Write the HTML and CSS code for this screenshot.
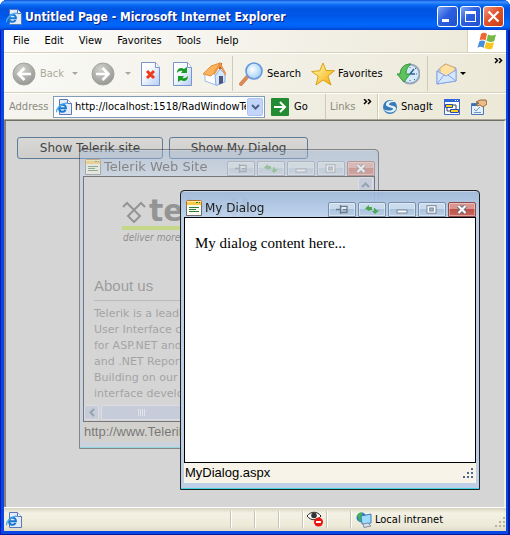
FILE: index.html
```html
<!DOCTYPE html>
<html lang="en">
<head>
<meta charset="utf-8">
<title>Untitled Page - Microsoft Internet Explorer</title>
<link rel="stylesheet" href="styles.css">
</head>
<body>
<svg class="defs" aria-hidden="true">
  <defs>
    <linearGradient id="page-fill" x1="0" y1="0" x2="1" y2="1"><stop offset="0.3" stop-color="#fff"/><stop offset="1" stop-color="#b4cdf5"/></linearGradient>
    <radialGradient id="disc" cx="0.4" cy="0.3" r="0.8"><stop offset="0" stop-color="#d2d2ce"/><stop offset="1" stop-color="#8f8f8b"/></radialGradient>
    <linearGradient id="gold" x1="0" y1="0" x2="1" y2="1"><stop offset="0.1" stop-color="#fff9a8"/><stop offset="1" stop-color="#f5a400"/></linearGradient>
    <radialGradient id="lens" cx="0.4" cy="0.4" r="0.6"><stop offset="0" stop-color="#fff"/><stop offset="1" stop-color="#a3d0f8"/></radialGradient>
  </defs>
  <symbol id="ie" viewBox="0 0 16 16">
    <path d="M3.5.5h8l4 4v11h-12z" fill="#e4ecfa" stroke="#5b78b8"/>
    <path d="M11.500.5v4h4" fill="#fff" stroke="#5b78b8"/>
    <path d="M2.300 9.300h7.600c.2-4.800-6.300-4.800-6.800-.3-.3 4.300 4.800 4.800 6.500 1.900" fill="none" stroke="#1878d0" stroke-width="2"/>
    <path d="M.8 13.200C-.8 10 6.500 3.500 11 4.300" fill="none" stroke="#48a9ee" stroke-width="1.300"/>
  </symbol>
  <symbol id="app" viewBox="0 0 16 16">
    <rect x=".5" y=".5" width="15" height="15" rx="1" fill="#fbfaf0" stroke="#b0702c"/>
    <path d="M1 1h14v4H1z" fill="#fbc94a"/><path d="M1 1h14v1H1z" fill="#fff0a0"/>
    <path d="M10 2h2v1h-2zm3 0h1v1h-1z" fill="#2d7a34"/>
    <path d="M3 7.500h10M3 9.500h7M3 11.500h10" stroke="#2d7d38"/>
    <path d="M15.500 6v9.500H.5V7" fill="none" stroke="#707070"/>
  </symbol>
  <symbol id="pin" viewBox="0 0 12 9"><path d="M0 4.500h4M4.500 0v9M5 1.500h6v6H5M7 4.500h4" fill="none" stroke="#6b7b8e" stroke-width="1.300"/><path d="M6 2.300h4.300v1.400H6z" fill="#fff"/></symbol>
  <symbol id="reload" viewBox="0 0 14 9"><path d="M0 3.500 4 0v2h3v3H5L4 6zM14 5.500 10 9 7 6h2V3h1l1 2z" fill="#4aa84a"/></symbol>
  <symbol id="minus" viewBox="0 0 12 9"><rect x="1" y="5" width="10" height="3" fill="#fff" stroke="#75869a"/></symbol>
  <symbol id="square" viewBox="0 0 12 9"><rect x="1" y=".7" width="9" height="7.500" fill="#fff" stroke="#75869a"/><rect x="3.700" y="3" width="3.600" height="3" fill="#a9bdd2" stroke="#75869a"/></symbol>
  <symbol id="cross" viewBox="0 0 12 9"><path d="m2.500 1 7 7m0-7-7 7" stroke="#626b7d" stroke-width="4"/><path d="m2.500 1 7 7m0-7-7 7" stroke="#fff" stroke-width="2.200"/></symbol>
  <symbol id="more" viewBox="0 0 9 6"><path d="m1 0 2.500 2.500L1 5M5 0l2.500 2.500L5 5" fill="none" stroke="#000" stroke-width="1.500"/></symbol>
</svg>

<div class="browser">
  <header class="titlebar">
    <svg class="icon16"><use href="#ie"/></svg>
    <h1>Untitled Page - Microsoft Internet Explorer</h1>
    <div class="captions">
      <button type="button" aria-label="Minimize"><svg viewBox="0 0 21 21"><path d="M5 13h7v3H5z" fill="#fff"/></svg></button>
      <button type="button" aria-label="Maximize"><svg viewBox="0 0 21 21"><path d="M5 5h11v11H5zM6 8v7h9V8z" fill="#fff" fill-rule="evenodd"/></svg></button>
      <button type="button" class="close" aria-label="Close"><svg viewBox="0 0 21 21"><path d="m5.500 5.500 10 10m0-10-10 10" stroke="#fff" stroke-width="2.200"/></svg></button>
    </div>
  </header>

  <nav class="menubar">
    <button type="button">File</button><button type="button">Edit</button><button type="button">View</button><button type="button">Favorites</button><button type="button">Tools</button><button type="button">Help</button>
    <span class="throbber"><svg viewBox="0 0 20 18">
      <path d="M4 2c2-2 4-1.300 6 0L8.500 8.500C6.500 7 4.500 7 2.500 8.500z" fill="#ee6534"/>
      <path d="M11 2.600c3 1.500 5 1.200 8 0L17.300 9c-3 1.200-5 1.200-7.800-.2z" fill="#74b943"/>
      <path d="M2.200 9.600c2-1.500 4-1.300 6 0l-1.700 6.300C4.500 14.500 2.500 14.500.5 16z" fill="#4a8fdc"/>
      <path d="M9.200 10c3 1.400 5 1.300 7.800.2l-1.700 6.200c-3 1.300-5 1-7.800-.3z" fill="#fbc41c"/></svg></span>
  </nav>

  <div class="toolbar">
    <button type="button" class="tool back" disabled>
      <svg class="icon24" viewBox="0 0 24 24"><circle cx="12" cy="12" r="11" fill="url(#disc)" stroke="#a4a4a0"/><path d="M19 12H7m5.500-6L6.500 12l6 6" fill="none" stroke="#fff" stroke-width="2.600"/></svg>
      <span>Back</span><i class="caret"></i></button>
    <button type="button" class="tool forward" disabled aria-label="Forward">
      <svg class="icon24" viewBox="0 0 24 24"><circle cx="12" cy="12" r="11" fill="url(#disc)" stroke="#a4a4a0"/><path d="M5 12h12m-5.500-6 6 6-6 6" fill="none" stroke="#fff" stroke-width="2.600"/></svg>
      <i class="caret"></i></button>
    <button type="button" class="tool sheet" aria-label="Stop"><svg class="icon24" viewBox="0 0 24 24"><path d="M3.500.5h14l4 5v18h-18z" fill="url(#page-fill)" stroke="#7c94cc"/><path d="M17.500.5v5h4" fill="#fff" stroke="#7c94cc"/><path d="m9 9 7 7m0-7-7 7" stroke="#ee3d16" stroke-width="3"/></svg></button>
    <button type="button" class="tool sheet" aria-label="Refresh"><svg class="icon24" viewBox="0 0 24 24"><path d="M3.500.5h14l4 5v18h-18z" fill="url(#page-fill)" stroke="#7c94cc"/><path d="M17.500.5v5h4" fill="#fff" stroke="#7c94cc"/><path d="M7 11c0-5 4-6 7-4l3-2v6h-6l1.500-2C10.500 8.500 9 9 7 11zM18 14c0 5-4 6-7 4l-3 2v-6h6l-1.500 2c2 .5 3.500 0 5.500-2z" fill="#179b23"/></svg></button>
    <button type="button" class="tool home" aria-label="Home"><svg class="icon24" viewBox="0 0 24 24"><path d="m3 13 4-5 7 6v9L3 19z" fill="#fff" stroke="#9dbbe6"/><path d="m13 14 5-7 5 5v8l-9 3.500z" fill="#d4e6fb" stroke="#8bb0e4"/><path d="M17 1h3v6h-3z" fill="#c25e2c"/><path d="M1 12 9 4l9-3-6 10-3 3z" fill="#fbb45c" stroke="#e2913f"/><path d="m12 12 6-10 6 11" fill="none" stroke="#e89545" stroke-width="2"/><path d="M17 14h4v7l-4 1.500z" fill="#4c5580"/></svg></button>
    <button type="button" class="tool search"><svg class="icon24" viewBox="0 0 24 24"><path d="m2 22 7-8" stroke="#d68a58" stroke-width="4" stroke-linecap="round"/><circle cx="15" cy="9" r="8" fill="url(#lens)" stroke="#6497dc" stroke-width="1.600"/></svg><span>Search</span></button>
    <button type="button" class="tool favorites"><svg class="icon24" viewBox="0 0 24 24"><path d="m12 1 3 7.500 8.500.2-6.600 5.500L20 23l-8-5-7 5 2.300-8.800L.7 9.500l8-.7z" fill="url(#gold)" stroke="#d9a014"/></svg><span>Favorites</span></button>
    <button type="button" class="tool history" aria-label="History"><svg class="icon24" viewBox="0 0 24 24"><circle cx="14" cy="12" r="9.500" fill="#d4eafb" stroke="#98a8b8" stroke-width="2"/><path d="M14 5v1m0 12v1m7-7h-1m-1-5 1-1m-1 12-1-1" stroke="#48688c"/><path d="m18 7-4 5h5" fill="none" stroke="#345f9b" stroke-width="1.500"/><path d="M1 12h3C5 5 9 2 15 2c-3 2-5 5-5 10h4l-6 8z" fill="#5ec15c" stroke="#30983a"/></svg></button>
    <button type="button" class="tool mail" aria-label="Mail"><svg class="icon24" viewBox="0 0 24 24"><path d="m2 9 8-7 11 4v13L2 22z" fill="#b6d4fa" stroke="#86a6e2"/><path d="m5 6 6-4 9 4-1 6-7 3-7-3z" fill="#ffe1a2" stroke="#d8ae66"/><path d="m2 9 9 5 10-6v11L2 22z" fill="#d4e7ff" stroke="#86a6e2"/><path d="m2 22 7-9m12 6-8-6" stroke="#86a6e2"/></svg><i class="caret"></i></button>
    <svg class="more" role="img" aria-label="More tools"><use href="#more"/></svg>
  </div>

  <div class="addressbar">
    <form class="address">
      <label for="url">Address</label>
      <div class="combo"><svg class="icon16"><use href="#ie"/></svg><input id="url" type="text" value="http://localhost:1518/RadWindowTest/Default.aspx"><button type="button" class="drop" aria-label="Show addresses"><svg viewBox="0 0 9 6"><path d="m1 1 3.500 3.500L8 1" fill="none" stroke="#4d6185" stroke-width="2"/></svg></button></div>
      <button type="button" class="go"><svg viewBox="0 0 18 18"><rect width="18" height="18" rx="1" fill="#238c32"/><path d="M3 9h11M9 4l5 5-5 5" fill="none" stroke="#fff" stroke-width="2"/></svg>Go</button>
    </form>
    <div class="links"><span>Links</span><svg class="more"><use href="#more"/></svg></div>
    <div class="snag">
      <button type="button"><svg viewBox="0 0 16 16"><circle cx="8" cy="8" r="7" fill="#3979b6"/><path d="M14 3C9 0 3 3 4 6s8 2 7 4-6 2-10 0c4 5 12 4 13 0S6 7 7 5s4-2 7-2" fill="#e0f2fd"/></svg><span>SnagIt</span></button>
      <button type="button" aria-label="Developer toolbar"><svg viewBox="0 0 16 16"><path d="M.5.5h15v15H.5z" fill="#fff" stroke="#4168cc"/><path d="M0 0h16v3H0z" fill="#3167d8"/><path d="M11 1h1v1h-1zm2 0h1v1h-1z" fill="#fff"/><path d="M3 8v4h4M8 6h4v4" fill="none" stroke="#345"/><path d="M1.500 5.500h7v3h-7zM6.500 10.500h8v3h-8z" fill="#ffcf24" stroke="#214aae"/></svg></button>
      <button type="button" aria-label="Edit properties"><svg viewBox="0 0 16 16"><path d="M.5 4.500h12v11H.5z" fill="#e6effc" stroke="#4b78bb"/><path d="M1 5h7v2H1z" fill="#386fbc"/><path d="m3 10 2 2 4-4M3 13.500h7" fill="none" stroke="#7595bf"/><path d="m5 3 4-2h6l1 4-4 3-3-2-3 1-1-1 3-2z" fill="#edbc87" stroke="#936a47"/></svg></button>
    </div>
  </div>

  <main class="page">
    <div class="actions"><button type="button">Show Telerik site</button><button type="button">Show My Dialog</button></div>

    <section class="window site">
      <header class="window-head"><svg class="icon16"><use href="#app"/></svg><h2>Telerik Web Site</h2>
        <div class="controls"><button type="button" aria-label="Pin"><svg><use href="#pin"/></svg></button><button type="button" aria-label="Reload"><svg><use href="#reload"/></svg></button><button type="button" aria-label="Minimize"><svg><use href="#minus"/></svg></button><button type="button" aria-label="Maximize"><svg><use href="#square"/></svg></button><button type="button" class="close" aria-label="Close"><svg><use href="#cross"/></svg></button></div>
      </header>
      <div class="window-body">
        <div class="site-copy">
          <div class="brand"><svg viewBox="0 0 24 22"><path d="m1 6 4-4 13 13-6 6-6-6L19 2l4 4" fill="none" stroke="#444" stroke-width="2"/></svg><strong>telerik</strong></div>
          <p class="tagline">deliver more than expected</p>
          <h3>About us</h3>
          <p>Telerik is a leading vendor of<br>User Interface components<br>for ASP.NET and WinForms<br>and .NET Reporting.<br>Building on our solid<br>interface development</p>
        </div>
        <div class="vscroll"><span><svg viewBox="0 0 9 6"><path d="m1 5 3.500-3.500L8 5" fill="none" stroke="#4d6185" stroke-width="2"/></svg></span></div>
        <div class="hscroll"><span><svg viewBox="0 0 6 9"><path d="M5 1 1.500 4.500 5 8" fill="none" stroke="#4d6185" stroke-width="2"/></svg></span><i class="thumb"><svg viewBox="0 0 8 7"><path d="M.5 0v7m2-7v7m2-7v7m2-7v7" stroke="#eef4ff"/></svg></i></div>
      </div>
      <footer class="window-foot">http://www.Telerik.com</footer>
    </section>

    <section class="window dialog">
      <header class="window-head"><svg class="icon16"><use href="#app"/></svg><h2>My Dialog</h2>
        <div class="controls"><button type="button" aria-label="Pin"><svg><use href="#pin"/></svg></button><button type="button" aria-label="Reload"><svg><use href="#reload"/></svg></button><button type="button" aria-label="Minimize"><svg><use href="#minus"/></svg></button><button type="button" aria-label="Maximize"><svg><use href="#square"/></svg></button><button type="button" class="close" aria-label="Close"><svg><use href="#cross"/></svg></button></div>
      </header>
      <div class="window-body"><p>My dialog content here...</p></div>
      <footer class="window-foot">MyDialog.aspx<svg class="grip" viewBox="0 0 12 12"><path d="M9 1h2v2H9zM5 5h2v2H5zm4 0h2v2H9zM1 9h2v2H1zm4 0h2v2H5zm4 0h2v2H9z" fill="#4c6894"/></svg></footer>
    </section>
  </main>

  <footer class="status">
    <div class="message"><svg class="icon16"><use href="#ie"/></svg></div>
    <div class="cell"></div><div class="cell"></div><div class="cell"></div>
    <div class="cell"><svg class="icon16" viewBox="0 0 16 16"><path d="M0 5c4-5 10-5 14 0-4 5-10 5-14 0z" fill="#fff" stroke="#222"/><circle cx="7" cy="4.500" r="2.800" fill="#333"/><circle cx="11.500" cy="11" r="4.500" fill="#ee1313"/><path d="M9 10h5v2H9z" fill="#fff"/></svg></div>
    <div class="cell"></div>
    <div class="zone"><svg class="icon16" viewBox="0 0 16 16"><circle cx="5.500" cy="5.500" r="5" fill="#2c7bd6"/><path d="M1 4c2-4 5-4 6-3L5 4l2 3-3 3C2 9 4 7 1 4z" fill="#43b649"/><path d="m5 4 10-2v9L6 12z" fill="#9cdcff" stroke="#4a7bbb"/><path d="m7 12 5-1 3 3-7 1.500z" fill="#d8dde6" stroke="#8390a5"/></svg><span>Local intranet</span>
      <svg class="grip" viewBox="0 0 12 12"><path d="M9 1h2v2H9zM5 5h2v2H5zm4 0h2v2H9zM1 9h2v2H1zm4 0h2v2H5zm4 0h2v2H9z" fill="#b7b39f"/></svg></div>
  </footer>
</div>
</body>
</html>
```
FILE: styles.css
```css
* { box-sizing: border-box; }
html, body { height: 100%; }
body { margin: 0; background: #fff; font: 11px/16px "DejaVu Sans Condensed", "DejaVu Sans", sans-serif; color: #000; }
button { margin: 0; padding: 0; border: 0; background: none; font: inherit; color: inherit; }
h1, h2, h3, p { margin: 0; }
svg { display: block; flex: none; }
.defs { position: absolute; width: 0; height: 0; }
.icon16 { width: 16px; height: 16px; }
.icon24 { width: 24px; height: 24px; }
.more { width: 9px; height: 6px; }
.grip { width: 12px; height: 12px; margin-left: auto; }
.caret { border: 3px solid transparent; border-top-color: currentColor; border-bottom: 0; }

.browser { display: flex; flex-direction: column; height: 100%; padding: 0 4px 4px; border-radius: 7px 7px 0 0; overflow: hidden; background: #0a46e4; box-shadow: inset 1px 0 #0019bd, inset -2px -1px #001b9c; }

.titlebar { display: flex; align-items: center; height: 30px; flex: none; margin: 0 -4px; padding: 3px 6px 0; gap: 3px; background: linear-gradient(#0850d8 0, #3c91ff 2px, #0869f2 5px, #0054e2 9px, #0057e7 16px, #0067fc 24px, #0060f5 27px, #003ec9 30px); }
.titlebar h1 { flex: 1; font: bold 12px/20px "DejaVu Sans Condensed", sans-serif; color: #fff; text-shadow: 1px 1px #0a1c78; white-space: nowrap; }
.captions { display: flex; gap: 2px; }
.captions button { width: 21px; height: 21px; border: 1px solid #fff; border-radius: 3px; background: linear-gradient(135deg, #7ea4f5, #2c5fe0 45%, #2050cf); }
.captions svg { width: 21px; height: 21px; margin: -1px; }
.captions .close { background: linear-gradient(135deg, #f0997f, #e2532c 45%, #cb3d10); }

.menubar { display: flex; height: 23px; flex: none; padding-left: 1px; background: linear-gradient(90deg, #fcfcfc, #ece9d8); border-bottom: 1px solid #d8d2bd; }
.menubar button { padding: 0 7px 0 8px; }
.throbber { display: flex; align-items: center; justify-content: center; width: 39px; margin-left: auto; background: #fff; border-left: 1px solid #d8d2bd; }
.throbber svg { width: 20px; height: 18px; }

.toolbar { display: flex; height: 40px; flex: none; padding: 2px 3px 1px 8px; background: linear-gradient(90deg, #f9f9f6, #ece9d8); border-top: 1px solid #fff; border-bottom: 1px solid #d8d2bd; }
.tool { display: flex; align-items: center; gap: 4px; white-space: nowrap; }
.tool:disabled { color: #aca899; }
.back { width: 79px; }
.back .caret { margin-left: 4px; }
.forward { width: 47px; gap: 10px; }
.sheet { width: 32px; }
.home { width: 31px; border-right: 1px solid #d0cbb6; }
.search { width: 78px; padding-left: 6px; }
.favorites { width: 85px; gap: 3px; }
.history { width: 32px; border-right: 1px solid #d0cbb6; }
.mail { padding-left: 7px; gap: 1px; }
.toolbar .more { margin: 2px 0 0 auto; }

.addressbar { display: flex; height: 27px; flex: none; border-top: 1px solid #fff; border-bottom: 1px solid #aaa69a; background: linear-gradient(90deg, #f5f4ee, #ece9d8); }
.address { display: flex; flex: 1; min-width: 0; align-items: center; padding-left: 5px; }
.address label { width: 44px; color: #8c8a80; }
.combo { display: flex; flex: 1; min-width: 0; align-items: center; height: 22px; border: 1px solid #7f9db9; background: #fff; padding: 1px 1px 1px 2px; }
.combo input { flex: 1; min-width: 0; margin: 0 1px 0 3px; padding: 0; border: 0; outline: 0; background: none; font: inherit; }
.drop { display: grid; place-items: center; width: 16px; height: 18px; border: 1px solid #adc4f6; border-radius: 2px; background: #c4d5fb; }
.drop svg { width: 9px; height: 6px; }
.go { display: flex; align-items: center; gap: 5px; width: 60px; padding-left: 6px; }
.go svg { width: 18px; height: 18px; }
.links { display: flex; gap: 8px; width: 52px; padding: 5px 0 0 4px; color: #8c8a80; border-left: 1px solid #d0cbb6; }
.snag { display: flex; align-items: center; gap: 11px; width: 129px; padding-left: 4px; border-left: 1px solid #d0cbb6; box-shadow: inset 1px 0 #fff; }
.snag button { display: flex; align-items: center; gap: 3px; }
.snag svg { width: 16px; height: 16px; }

.page { position: relative; flex: 1; min-height: 0; overflow: hidden; border-left: 2px solid #85827b; border-top: 1px solid #716f64; border-right: 2px solid #f1efe2; padding: 16px 11px; background: #d5d5d5; }
.actions { display: flex; gap: 6px; }
.actions button { width: 146px; height: 22px; border: 1px solid #5f7c98; border-radius: 3px; font: 12px/18px "DejaVu Sans", sans-serif; color: #444; background: linear-gradient(#d8d8d7, #cdcdcb); }
.actions button + button { width: 139px; }

.window { position: absolute; display: flex; flex-direction: column; width: 300px; height: 300px; padding: 0 3px; border: 1px solid #222; border-radius: 4px 4px 0 0; background: linear-gradient(rgba(158, 184, 218, 0.92), rgba(190, 212, 238, 0.92) 26px, #bdd0e7 27px); box-shadow: inset 0 -1px #41d6e2; }
.site { left: 73px; top: 28px; opacity: 0.45; }
.dialog { left: 174px; top: 69px; }
.window-head { display: flex; align-items: flex-end; gap: 3px; height: 26px; flex: none; padding-left: 2px; box-shadow: inset 0 1px rgba(255, 255, 255, 0.35); }
.window-head .icon16 { margin-bottom: 1px; }
.window-head h2 { flex: 1; font: 12px/18px "DejaVu Sans", sans-serif; color: #222; white-space: nowrap; }
.controls { display: flex; gap: 2px; }
.controls button { display: grid; place-items: center; width: 28px; height: 15px; border: 1px solid #7890aa; border-radius: 2px 2px 0 0; background: linear-gradient(#c9dbed 45%, #a9c2dc 50%, #bcd0e5); box-shadow: inset 0 0 0 1px rgba(255, 255, 255, 0.4); }
.controls svg { width: 14px; height: 9px; }
.controls .close { border-color: #8b4b4e; background: linear-gradient(#da958e 45%, #bd5148 50%, #c8685c); }
.window-body { position: relative; flex: 1; min-height: 0; overflow: hidden; border: 1px solid #000; background: #fff; }
.window-foot { display: flex; align-items: center; height: 20px; flex: none; margin-bottom: 6px; padding: 0 2px 0 1px; background: #f7f3e9; font: 13px/18px "Liberation Sans", sans-serif; }
.dialog .window-body { padding: 16px 10px; font: 15px/18px "Liberation Serif", serif; }
.site h2 { font-size: 13px; }
.site .window-body { display: grid; grid-template-columns: 1fr 16px; grid-template-rows: 1fr 16px; background: #d5d5d5; }
.site .window-foot { background: #cfccc3; }
.site-copy { min-width: 0; overflow: hidden; padding: 16px 10px 0; font: 11px/16px "DejaVu Sans", sans-serif; color: #666; white-space: nowrap; }
.brand { display: flex; align-items: flex-end; gap: 3px; height: 37px; margin-left: 28px; color: #444; border-bottom: 4px solid #b2dc2c; }
.brand svg { width: 24px; height: 22px; margin-bottom: 3px; }
.brand strong { font: bold 30px/30px "DejaVu Sans", sans-serif; }
.tagline { margin: 0 0 0 29px; font: italic 10px/16px "DejaVu Sans Condensed", sans-serif; color: #333; }
.site-copy h3 { margin: 30px 0 5px; padding-bottom: 4px; border-bottom: 1px solid #999; font: 15px/20px "Liberation Sans", sans-serif; color: #555; }
.vscroll, .hscroll { background: #cdd1da; }
.vscroll span, .hscroll span { display: grid; place-items: center; width: 15px; height: 15px; border: 1px solid #e2e7f2; border-radius: 2px; background: #b3c1de; }
.vscroll svg { width: 9px; height: 6px; }
.hscroll { display: flex; gap: 2px; }
.hscroll svg { width: 6px; height: 9px; }
.thumb { display: grid; place-items: center; width: 82px; height: 15px; border: 1px solid #e2e7f2; border-radius: 2px; background: #b3c1de; }
.thumb svg { width: 8px; height: 7px; }

.status { display: flex; align-items: center; height: 24px; flex: none; border-top: 1px solid #fff; padding-left: 2px; background: linear-gradient(#d8d3bf, #f4f2e4 5px, #ece9d8 18px, #dedac6); }
.message { flex: 1; }
.cell { width: 24px; height: 17px; padding-left: 4px; border-left: 1px solid #c8c4b1; box-shadow: inset 1px 0 #fff; }
.zone { display: flex; align-items: center; gap: 3px; width: 156px; height: 17px; padding-left: 5px; border-left: 1px solid #c8c4b1; box-shadow: inset 1px 0 #fff; white-space: nowrap; }
.zone .grip { align-self: flex-end; }
```
